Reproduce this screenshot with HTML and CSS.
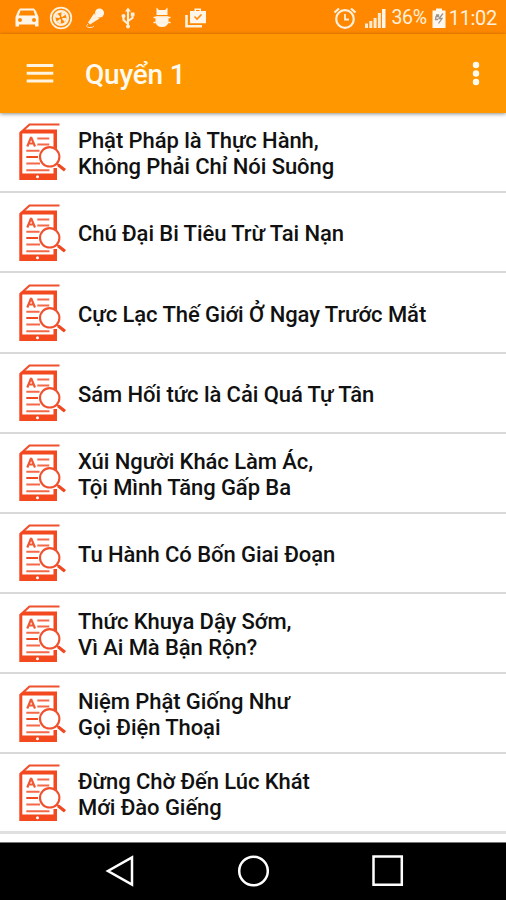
FILE: index.html
```html
<!DOCTYPE html>
<html lang="vi">
<head>
<meta charset="utf-8">
<title>Quyển 1</title>
<link rel="stylesheet" href="styles.css">
</head>
<body>
<svg class="defs" width="0" height="0">
  <symbol id="book" viewBox="0 0 50 60">
    <path d="M2.200 10 11.500 1.500H41.500" fill="none" stroke="#f0512d" stroke-width="2.200"/>
    <path d="M1.300 9.500 6 6.500H39V26.500H35.500V10.500H4.300V50.500H35.500V45H39V57H1.300Z" fill="#f4481e"/>
    <circle cx="19.500" cy="53.700" r="1.500" fill="#fff"/>
    <path d="M9.300 23.500 12.800 14.800H13.400L17 23.500M10.500 20.500H15.800" fill="none" stroke="#f05a36" stroke-width="2.200"/>
    <g fill="none" stroke="#f4694a" stroke-width="2">
      <path d="M19.300 15.500H31.300M19.300 21.500H31.300M8.300 27.800H21.500M8.300 40.500H22M8.300 47.200H31.500"/>
      <path d="M8.300 34H20" stroke="#f0481f"/>
    </g>
    <circle cx="31.700" cy="33.800" r="9.700" fill="#fff" stroke="#f0512d" stroke-width="2.100"/>
    <path d="M38.500 40.300 41 42.500" stroke="#f0512d" stroke-width="2.200"/>
    <path d="M40.300 42 47 47.300" stroke="#f0481f" stroke-width="3.200"/>
  </symbol>
</svg>

<header class="status">
  <div class="status-icons">
    <svg width="24" height="24" viewBox="0 0 24 24"><path fill="#fff5e8" fill-rule="evenodd" d="M5 2.500H19L21 5 23.500 11V20.500H20V18.500H4V20.500H.5V11L3 5ZM5.500 4.500 3.800 9.500H20.200L18.500 4.500ZM5 12A2 2 0 1 0 5 16A2 2 0 1 0 5 12ZM19 12A2 2 0 1 0 19 16A2 2 0 1 0 19 12Z"/></svg>
    <svg width="24" height="24" viewBox="0 0 24 24" fill="none" stroke="#fff0dd"><circle cx="12" cy="12" r="10.300" stroke-width="1.700"/><circle cx="12" cy="12" r="6.800" stroke-width="2.600"/><circle cx="12" cy="12" r="3.500" stroke-width="4" stroke-dasharray="2.750 2.750"/><circle cx="12" cy="12" r="1" fill="#ff8800" stroke="none"/></svg>
    <svg width="24" height="24" viewBox="0 0 24 24"><circle cx="16.500" cy="7" r="4.500" fill="#fff5e8"/><path d="M11 7.500 16.500 12.500 7 18.500 5 16.500Z" fill="#fff0dd"/><path d="M5 18Q2 21 6 21.500T11 20" fill="none" stroke="#ffe0ba"/></svg>
    <svg width="24" height="24" viewBox="0 0 24 24" fill="none" stroke="#fff0dd" stroke-width="2.100"><path d="M12 4V21M12 18 7.500 14V9M12 15 16.500 12V8"/><path d="M9 5.500 12 1.500 15 5.500Z" fill="#fff0dd" stroke="none"/><circle cx="7.500" cy="10" r="2" fill="#fff0dd" stroke="none"/><circle cx="12" cy="20.500" r="1.900" fill="#fff0dd" stroke="none"/><path d="M14.800 6.500H18.500V10.200H14.800Z" fill="#fff0dd" stroke="none"/></svg>
    <svg width="24" height="24" viewBox="0 0 24 24" fill="#fff5e8"><path d="M6.500 1.500 9 4H15L17.500 1.500V9H6.500ZM5.500 10.200H18.500V15Q18 21 12 21T5.500 15Z"/><path d="M3.500 11.500H20.500M3.500 16.500H20.500" stroke="#fff0dd" stroke-width="1.700"/></svg>
    <svg width="24" height="24" viewBox="0 0 24 24"><path d="M2.500 9V20.200H18" fill="none" stroke="#fff0dd" stroke-width="2.600"/><path d="M6 5H10.500V2.500H17V5H22V17.300H6ZM12 5H15.500V4H12Z" fill="#fff5e8" fill-rule="evenodd"/><path d="M10.500 10.500 13 13 17.500 8.500" fill="none" stroke="#ff8c08" stroke-width="1.600"/></svg>
  </div>
  <div class="status-right">
    <svg width="24" height="24" viewBox="0 0 24 24" fill="none" stroke="#fff0dd"><circle cx="12" cy="13" r="8.800" stroke-width="2.200"/><path d="M12 8V13.500H16" stroke-width="1.800"/><path d="M1.500 6.500 6 2.500M18 2.500 22.500 6.500" stroke-width="2.200"/></svg>
    <svg class="signal" width="22" height="22" viewBox="0 0 22 22" fill="#ffe9cf"><path d="M1 16.500H4V21H1ZM5.300 14H8.300V21H5.300ZM9.600 11H12.600V21H9.600ZM13.900 6H16.900V21H13.900Z"/><path d="M18 2H21.500V21H18Z" fill="#fff5e8"/></svg>
    <span class="percent">36%</span>
    <svg class="battery" width="14" height="22" viewBox="0 0 14 22"><path d="M4 1.500H10V3.500H13.500V21H.5V3.500H4Z" fill="#fff8ef"/><path d="M4 8H6.500V9.500H4L3.500 12.500H6M11 6.500 7 11.500H10L6.500 16.500" fill="none" stroke="#9a958e" stroke-width="1.300"/></svg>
    <span class="clock">11:02</span>
  </div>
</header>

<nav class="appbar">
  <svg class="menu" width="28" height="22" viewBox="0 0 28 22"><path d="M.7 3.500H27.300M.7 11.200H27.300M.7 18.900H27.300" stroke="#fff4df" stroke-width="3"/></svg>
  <h1>Quyển 1</h1>
  <svg class="more" width="8" height="26" viewBox="0 0 8 26" fill="#fffaf0"><circle cx="4" cy="5" r="3.200"/><circle cx="4" cy="13.500" r="3.200"/><circle cx="4" cy="22" r="3.200"/></svg>
</nav>

<main class="list">
  <div class="row"><svg class="book"><use href="#book"/></svg><p>Phật Pháp là Thực Hành,<br>Không Phải Chỉ Nói Suông</p></div>
  <div class="row"><svg class="book"><use href="#book"/></svg><p>Chú Đại Bi Tiêu Trừ Tai Nạn</p></div>
  <div class="row"><svg class="book"><use href="#book"/></svg><p>Cực Lạc Thế Giới Ở Ngay Trước Mắt</p></div>
  <div class="row"><svg class="book"><use href="#book"/></svg><p>Sám Hối tức là Cải Quá Tự Tân</p></div>
  <div class="row"><svg class="book"><use href="#book"/></svg><p>Xúi Người Khác Làm Ác,<br>Tội Mình Tăng Gấp Ba</p></div>
  <div class="row"><svg class="book"><use href="#book"/></svg><p>Tu Hành Có Bốn Giai Đoạn</p></div>
  <div class="row"><svg class="book"><use href="#book"/></svg><p>Thức Khuya Dậy Sớm,<br>Vì Ai Mà Bận Rộn?</p></div>
  <div class="row"><svg class="book"><use href="#book"/></svg><p>Niệm Phật Giống Như<br>Gọi Điện Thoại</p></div>
  <div class="row"><svg class="book"><use href="#book"/></svg><p>Đừng Chờ Đến Lúc Khát<br>Mới Đào Giếng</p></div>
</main>

<footer class="navbar">
  <svg width="32" height="32" viewBox="0 0 32 32"><path d="M30 2.500V29.500L6 16Z"/></svg>
  <svg width="32" height="32" viewBox="0 0 32 32"><circle cx="16.500" cy="16" r="14.300"/></svg>
  <svg width="32" height="32" viewBox="0 0 32 32"><path d="M1.500 1.500H29.800V29.800H1.500Z"/></svg>
</footer>
</body>
</html>
```
FILE: styles.css
```css
* { box-sizing: border-box; }
body {
  margin: 0;
  height: 900px;
  overflow: hidden;
  display: flex;
  flex-direction: column;
  background: #fff;
  font-family: Roboto, "Noto Sans", sans-serif;
}
svg { display: block; flex: none; }
.defs { position: absolute; }
.status {
  flex: none;
  height: 34px;
  padding: 1px 9px 0 15px;
  display: flex;
  justify-content: space-between;
  align-items: center;
  background: #ff8800;
  color: #fff0dd;
  font-size: 20px;
}
.status-icons { display: flex; gap: 9.800px; }
.status-right { display: flex; align-items: center; }
.signal { margin-left: 7px; }
.percent { margin-left: 5px; font-size: 19.500px; letter-spacing: -0.300px; }
.battery { margin-left: 5px; }
.clock { margin-left: 3px; letter-spacing: -0.300px; }
.appbar {
  flex: none;
  position: relative;
  height: 78.500px;
  padding: 0 26px;
  display: flex;
  align-items: center;
  background: #ff9800;
  box-shadow: 0 1px 4px rgba(0, 0, 0, 0.45);
}
h1 {
  margin: 4px auto 0 31px;
  color: #fffaf0;
  font-size: 28px;
  line-height: 34px;
  font-weight: 500;
  letter-spacing: -0.200px;
}
.list { flex: 1; min-height: 0; }
.row {
  height: 80.150px;
  padding-left: 18px;
  display: flex;
  align-items: center;
  border-bottom: 2px solid #d8d8d8;
}
.row:first-child { height: 80.800px; }
.row:last-child { border-bottom: 3px solid #e0e0e0; }
.book { width: 50px; height: 60px; margin-top: 3px; }
.row p {
  margin: 4px 0 0 10px;
  color: #111;
  font-size: 22px;
  line-height: 26px;
  font-weight: 500;
  letter-spacing: -0.070px;
  white-space: nowrap;
}
.navbar {
  flex: none;
  height: 58.500px;
  padding: 0 102px;
  display: flex;
  justify-content: space-between;
  align-items: center;
  background: #000;
  border-top: 1px solid #777;
}
.navbar svg { fill: none; stroke: #fff; stroke-width: 2.500; }
```
